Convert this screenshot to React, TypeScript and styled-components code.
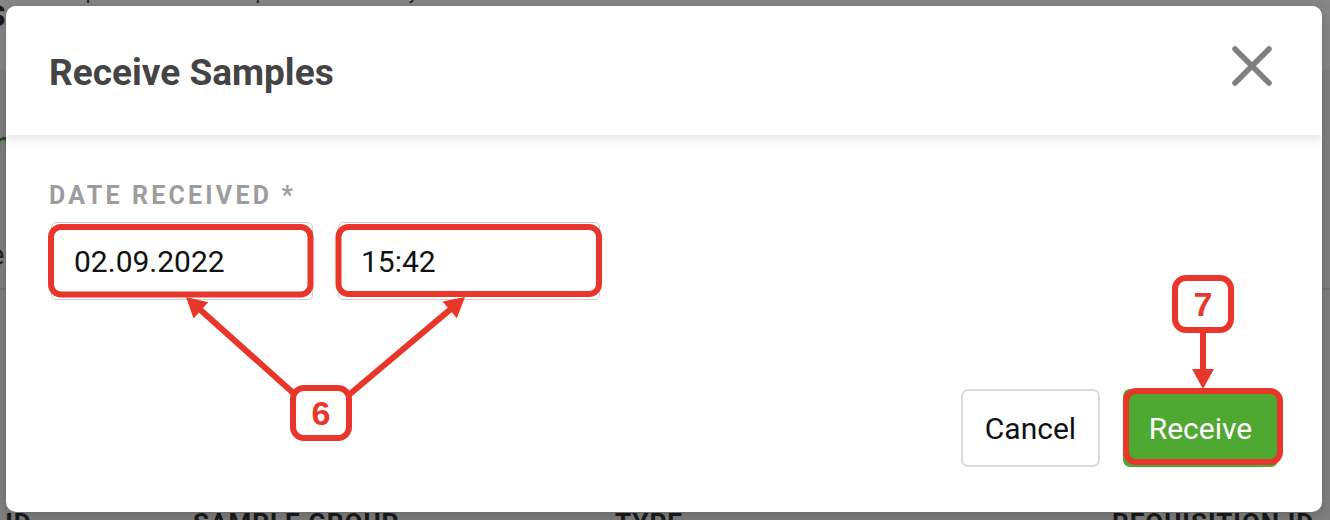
import React from "react";
import styled, { createGlobalStyle } from "styled-components";

const RED = "#e8372a";

const GlobalStyle = createGlobalStyle`
  html, body { margin: 0; padding: 0; }
  body {
    width: 1330px;
    height: 520px;
    overflow: hidden;
    background: #ffffff;
    font-family: Roboto, "Noto Sans", Arial, sans-serif;
  }
  * { box-sizing: border-box; }
`;

const Screen = styled.div`
  position: relative;
  width: 1330px;
  height: 520px;
  overflow: hidden;
`;

/* ---------- background page (dimmed) ---------- */
const Page = styled.div`
  display: flex;
  flex-direction: column;
  height: 100%;
  background: #f3f3f3;
  overflow: hidden;
`;

const NavBar = styled.header`
  flex: none;
  height: 70px;
  background: #ffffff;
  display: flex;
  align-items: flex-start;
  overflow: hidden;
`;

const Logo = styled.span`
  font-size: 30px;
  font-weight: 700;
  color: #333;
  line-height: 30px;
  margin: 1px 0 0 -13px;
`;

const NavLinks = styled.nav`
  display: flex;
  gap: 70px;
  margin: -18px 0 0 40px;
`;

const NavLink = styled.span`
  font-size: 20px;
  line-height: 20px;
  color: #333;
`;

const Toolbar = styled.div`
  flex: none;
  height: 220px;
  display: flex;
  flex-direction: column;
  align-items: flex-start;
  padding-top: 58px;
  gap: 82px;
  border-bottom: 2px solid #dedede;
`;

const SideText = styled.span<{ $green?: boolean; $shift: number }>`
  font-size: 30px;
  line-height: 30px;
  font-weight: ${(p) => (p.$green ? 500 : 400)};
  color: ${(p) => (p.$green ? "#2f8f1f" : "#444")};
  margin-left: ${(p) => p.$shift}px;
`;

const Rows = styled.div`
  flex: none;
  height: 220px;
`;

const TableHead = styled.div`
  flex: none;
  display: grid;
  grid-template-columns: 283px 422px 497px 1fr;
  margin-left: -90px;
  width: 1420px;
  font-size: 26px;
  line-height: 26px;
  font-weight: 700;
  text-transform: uppercase;
  letter-spacing: 1px;
  color: #333;
`;

/* ---------- modal ---------- */
const Overlay = styled.div`
  position: absolute;
  inset: 0;
  background: rgba(0, 0, 0, 0.47);
  display: flex;
  align-items: flex-start;
  padding: 6px 8px 0 6px;
`;

const Modal = styled.div`
  flex: 1;
  background: #ffffff;
  border-radius: 10px;
  box-shadow: 0 4px 16px rgba(0, 0, 0, 0.2);
  display: flex;
  flex-direction: column;
  overflow: hidden;
`;

const ModalHeader = styled.div`
  position: relative;
  z-index: 1;
  height: 129px;
  display: flex;
  align-items: center;
  justify-content: space-between;
  padding: 0 48px 0 43px;
  background: #ffffff;
  box-shadow: 0 3px 10px rgba(0, 0, 0, 0.12);
`;

const Title = styled.h2`
  margin: 3px 0 0 0;
  font-size: 37px;
  line-height: 37px;
  font-weight: 700;
  color: #444444;
`;

const CloseButton = styled.button`
  width: 44px;
  height: 44px;
  padding: 0;
  margin-bottom: 9px;
  border: none;
  background: transparent;
  display: flex;
  align-items: center;
  justify-content: center;
`;

const ModalBody = styled.div`
  display: flex;
  flex-direction: column;
  padding: 48px 44px 45px 45px;
`;

const FieldLabel = styled.label`
  font-size: 25px;
  line-height: 25px;
  font-weight: 700;
  color: #9d9d9d;
  letter-spacing: 3.2px;
  margin-left: -2px;
`;

const FieldRow = styled.div`
  display: flex;
  gap: 25px;
  margin-top: 14px;
`;

const TextInput = styled.input`
  width: 262px;
  height: 78px;
  padding: 0 22px;
  border: 1.5px solid #cfcfcf;
  border-radius: 5px;
  background: #ffffff;
  font-family: Roboto, "Noto Sans", Arial, sans-serif;
  font-size: 30px;
  color: #111111;
  outline: none;
`;

const Footer = styled.div`
  display: flex;
  justify-content: flex-end;
  gap: 23px;
  margin-top: 89px;
`;

const Button = styled.button<{ $primary?: boolean }>`
  height: 78px;
  width: ${(p) => (p.$primary ? 155 : 139)}px;
  border-radius: 7px;
  border: ${(p) => (p.$primary ? "none" : "2px solid #dcdcdc")};
  background: ${(p) => (p.$primary ? "#4fa832" : "#ffffff")};
  color: ${(p) => (p.$primary ? "#ffffff" : "#111111")};
  font-family: Roboto, "Noto Sans", Arial, sans-serif;
  font-size: 30px;
  padding: 0;
`;

/* ---------- annotation layer ---------- */
const Annotations = styled.div`
  position: absolute;
  inset: 0;
  pointer-events: none;
`;

const AnnotationSvg = styled.svg`
  position: absolute;
  inset: 0;
`;

const Badge = styled.div<{ $x: number; $y: number; $h: number }>`
  position: absolute;
  left: ${(p) => p.$x}px;
  top: ${(p) => p.$y}px;
  width: 62px;
  height: ${(p) => p.$h}px;
  border: 6px solid ${RED};
  border-radius: 14px;
  background: #ffffff;
  display: flex;
  align-items: center;
  justify-content: center;
  font-family: "Liberation Sans", Arial, sans-serif;
  font-weight: 700;
  font-size: 34px;
  color: ${RED};
`;

type Pt = [number, number];

function Arrow({ tail, tip }: { tail: Pt; tip: Pt }) {
  const dx = tip[0] - tail[0];
  const dy = tip[1] - tail[1];
  const len = Math.hypot(dx, dy);
  const ux = dx / len;
  const uy = dy / len;
  const headLen = 20;
  const half = 11;
  const bx = tip[0] - ux * headLen;
  const by = tip[1] - uy * headLen;
  const px = -uy;
  const py = ux;
  const pts = `${tip[0]},${tip[1]} ${bx + px * half},${by + py * half} ${bx - px * half},${by - py * half}`;
  return (
    <g>
      <line x1={tail[0]} y1={tail[1]} x2={bx + ux * 2} y2={by + uy * 2} stroke={RED} strokeWidth={6} />
      <polygon points={pts} fill={RED} />
    </g>
  );
}

export default function App() {
  return (
    <Screen>
      <GlobalStyle />
      <Page>
        <NavBar>
          <Logo>S</Logo>
          <NavLinks>
            <NavLink>Samples</NavLink>
            <NavLink>Work Space</NavLink>
            <NavLink>Analytics</NavLink>
            <NavLink>More</NavLink>
          </NavLinks>
        </NavBar>
        <Toolbar>
          <SideText $green $shift={-41}>Run</SideText>
          <SideText $shift={-96}>Samples</SideText>
        </Toolbar>
        <Rows />
        <TableHead>
          <span>Order ID</span>
          <span>Sample Group</span>
          <span>Type</span>
          <span>Requisition ID</span>
        </TableHead>
      </Page>

      <Overlay>
        <Modal role="dialog" aria-label="Receive Samples">
          <ModalHeader>
            <Title>Receive Samples</Title>
            <CloseButton aria-label="Close">
              <svg width="44" height="44" viewBox="0 0 44 44">
                <path d="M5 5 L39 39 M39 5 L5 39" stroke="#7f7f7f" strokeWidth="5.5" strokeLinecap="round" fill="none" />
              </svg>
            </CloseButton>
          </ModalHeader>
          <ModalBody>
            <FieldLabel>DATE RECEIVED *</FieldLabel>
            <FieldRow>
              <TextInput readOnly defaultValue="02.09.2022" />
              <TextInput readOnly defaultValue="15:42" />
            </FieldRow>
            <Footer>
              <Button>Cancel</Button>
              <Button $primary>Receive</Button>
            </Footer>
          </ModalBody>
        </Modal>
      </Overlay>

      <Annotations>
        <AnnotationSvg width="1330" height="520" viewBox="0 0 1330 520">
          <rect x="51" y="227" width="259.5" height="67.5" rx="10" fill="none" stroke={RED} strokeWidth="6" />
          <rect x="338.5" y="227" width="260.5" height="67" rx="10" fill="none" stroke={RED} strokeWidth="6" />
          <rect x="1126" y="391" width="154" height="71" rx="10" fill="none" stroke={RED} strokeWidth="6" />
          <Arrow tail={[300, 399]} tip={[186, 297]} />
          <Arrow tail={[344, 399]} tip={[465, 297]} />
          <Arrow tail={[1203, 320]} tip={[1203, 389]} />
        </AnnotationSvg>
        <Badge $x={290} $y={385} $h={56}>6</Badge>
        <Badge $x={1172} $y={275} $h={58}>7</Badge>
      </Annotations>
    </Screen>
  );
}
